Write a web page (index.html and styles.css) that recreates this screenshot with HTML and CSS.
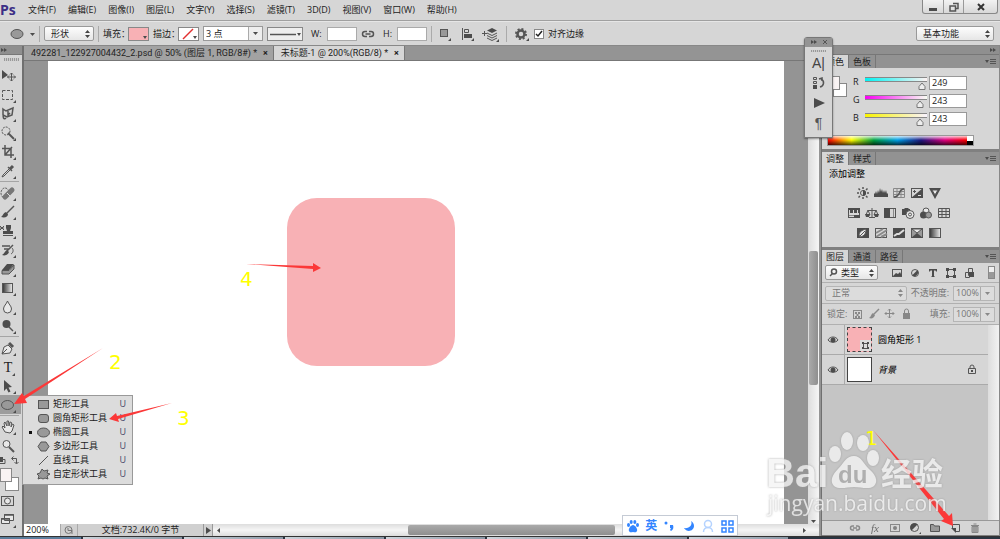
FILE: index.html
```html
<!DOCTYPE html>
<html lang="zh-CN">
<head>
  <meta charset="UTF-8" />
  <meta name="viewport" content="width=device-width, initial-scale=1.0" />
  <title>Photoshop</title>
  <link rel="stylesheet" href="styles.css">
</head>
<body>
  <header class="menubar">
    <span class="logo">Ps</span>
    <nav class="menus">
      <button>文件(F)</button>
      <button>编辑(E)</button>
      <button>图像(I)</button>
      <button>图层(L)</button>
      <button>文字(Y)</button>
      <button>选择(S)</button>
      <button>滤镜(T)</button>
      <button>3D(D)</button>
      <button>视图(V)</button>
      <button>窗口(W)</button>
      <button>帮助(H)</button>
    </nav>
    <div class="window-buttons">
      <button aria-label="最小化"><svg width="12" height="12"><path class="f" d="M2 7h8v3H2z"/></svg></button>
      <button aria-label="还原"><svg width="12" height="12"><path class="thick" d="M5 2.500h5v5H8M2 5h5.500v5H2z"/></svg></button>
      <button class="close" aria-label="关闭"><svg width="12" height="12"><path class="cross" d="M3 3l6 6M9 3l-6 6"/></svg></button>
    </div>
  </header>

  <div class="options">
    <button class="preset" aria-label="工具预设">
      <svg width="26" height="14"><ellipse class="g" cx="7" cy="7" rx="6" ry="4.500"/><path class="f" d="M20 6h5l-2.500 3z"/></svg>
    </button>
    <select class="mode" aria-label="模式"><option>形状</option></select>
    <i class="divider"></i>
    <label for="fill">填充：</label>
    <button id="fill" class="swatch pink"><svg width="19" height="13"><path class="f" d="M14 9h4l-2 3z"/></svg></button>
    <label for="stroke">描边：</label>
    <button id="stroke" class="swatch"><svg width="19" height="13"><path class="no-stroke" d="M4 12L14 2"/><path class="f" d="M14 9h4l-2 3z"/></svg></button>
    <div class="combo stroke-width">
      <input type="text" value="3 点" aria-label="描边宽度">
      <button aria-label="选择宽度"><svg width="7" height="5"><path class="f" d="M1 1h5L3.500 4z"/></svg></button>
    </div>
    <button class="line-type" aria-label="描边类型"><svg width="34" height="12"><path class="thick" d="M2 6.500h26"/><path class="f" d="M29 5h4l-2 3z"/></svg></button>
    <label for="w">W:</label>
    <input id="w" class="size" type="text">
    <button aria-label="链接"><svg width="14" height="12"><path class="thick" d="M6 3.500H4a2.500 2.500 0 000 5h2M8 3.500h2a2.500 2.500 0 010 5H8M4.500 6h5"/></svg></button>
    <label for="h">H:</label>
    <input id="h" class="size" type="text">
    <i class="divider"></i>
    <div class="path-tools">
      <button aria-label="路径操作"><svg width="16" height="16"><rect class="g" x="3.500" y="3.500" width="7" height="7"/><path class="f" d="M14 12v3h-3z"/></svg></button>
      <button aria-label="路径对齐"><svg width="16" height="16"><path d="M3.500 2v12"/><path d="M5.500 3.500h4v3h-4z"/><path class="f" d="M5 8h8v4H5zM15 12v3h-3z"/></svg></button>
      <button aria-label="路径排列"><svg width="18" height="16"><path d="M1 7.500h5M3.500 5v5"/><path class="f" d="M11 2l5 2.500-5 2.500-5-2.500z"/><path d="M6 7l5 2.500L16 7M6 9.500l5 2.500 5-2.500M6 12l5 2.500 5-2.500"/><path class="f" d="M18 13v3h-3z"/></svg></button>
    </div>
    <i class="divider"></i>
    <button class="gear" aria-label="设置"><svg width="16" height="16"><circle class="gear-ring" cx="7" cy="8" r="3.500"/><circle class="gear-teeth" cx="7" cy="8" r="5"/><path class="f" d="M15 12v3h-3z"/></svg></button>
    <label class="check"><input type="checkbox" checked>对齐边缘</label>
    <select class="workspace" aria-label="工作区"><option>基本功能</option></select>
  </div>

  <main class="app">
    <aside class="toolbar">
      <div class="strip"><svg width="7" height="7"><path class="f" d="M0 1l3 2-3 2zM3 1l3 2-3 2z"/></svg></div>
      <div class="grip"></div>
      <button aria-label="移动"><svg width="16" height="16"><path class="f" d="M2 2l6 5-6 4z"/><path d="M11.500 5v8M7.500 9h8M10 6.500l1.500-1.500 1.500 1.500M10 11.500l1.500 1.500 1.500-1.500M9 7.500L7.500 9 9 10.500M14 7.500L15.500 9 14 10.500"/></svg></button>
      <button aria-label="选框"><svg width="16" height="16"><rect x="2.500" y="3.500" width="10" height="9" stroke-dasharray="3 1.500"/><path class="f" d="M16 13v3h-3z"/></svg></button>
      <button aria-label="套索"><svg width="16" height="16"><path class="thick" d="M3 3l3 2 7-3-1 7-5 2-4-2zM4 9c-2 2 0 5 2 3M8 5v4l2-2"/><path class="f" d="M16 13v3h-3z"/></svg></button>
      <button aria-label="魔棒"><svg width="16" height="16"><circle cx="6" cy="6" r="4" stroke-dasharray="2 1"/><path class="bold" d="M8 8l6 6"/><path class="f" d="M16 13v3h-3z"/></svg></button>
      <button aria-label="裁剪"><svg width="16" height="16"><path class="thick" d="M5 1v10h9M2 4.500h9V14M5 11l7-8"/><path class="f" d="M16 13v3h-3z"/></svg></button>
      <button aria-label="吸管"><svg width="16" height="16"><path class="heavy" d="M10 6l3-3"/><path class="thick" d="M8 4l4 4"/><path d="M9 6l-6 6-1 2 2-1 6-6"/><path class="f" d="M16 13v3h-3z"/></svg></button>
      <hr>
      <button aria-label="修复画笔"><svg width="16" height="16"><ellipse cx="5" cy="8" rx="4" ry="5" stroke-dasharray="2 1"/><path class="bandage" d="M5 12l7-7"/><path class="pale" d="M7 8l3 3"/><path class="f" d="M16 13v3h-3z"/></svg></button>
      <button aria-label="画笔"><svg width="16" height="16"><path class="thick" d="M14 2L7 9"/><path class="f" d="M6 8l2 2c0 3-3 4-7 3 2-1 2-4 5-5zM16 13v3h-3z"/></svg></button>
      <button aria-label="仿制图章"><svg width="16" height="16"><path d="M0 3l4 4M4 3L0 7M0 5h4"/><path class="f" d="M6 2h5v3l-1 3h3v3H3V8h4L6 5z"/><path d="M3 12.500h10"/><path class="f" d="M16 13v3h-3z"/></svg></button>
      <button aria-label="历史画笔"><svg width="16" height="16"><path class="thick" d="M2 4h8M4 7h5M13 3L7 9"/><path class="f" d="M7 8l2 2c-1 3-4 4-7 3 2-1 3-4 5-5z"/><path d="M12 6c2 2 1 5-1 6"/><path class="f" d="M16 13v3h-3z"/></svg></button>
      <button aria-label="橡皮擦"><svg width="16" height="16"><path class="g" d="M2 9.500h7L14 4v4l-5 5H2z"/><path class="f" d="M7 3h7l-5 6H2z"/><path class="f" d="M16 13v3h-3z"/></svg></button>
      <button aria-label="渐变"><svg width="16" height="16"><defs><linearGradient id="gr"><stop stop-color="#333"/><stop offset="1" stop-color="#eee"/></linearGradient></defs><rect class="ramp-fill" x="2.500" y="3.500" width="10" height="9"/><path class="f" d="M16 13v3h-3z"/></svg></button>
      <button aria-label="模糊"><svg width="16" height="16"><path class="light" d="M7.500 2c1 3 4 5 4 8a4 4 0 01-8 0c0-3 3-5 4-8z"/><path class="f" d="M16 13v3h-3z"/></svg></button>
      <button aria-label="加深"><svg width="16" height="16"><circle class="f" cx="6.500" cy="6" r="4"/><path class="thick" d="M9 9l4 4"/><path class="f" d="M16 13v3h-3z"/></svg></button>
      <hr>
      <button aria-label="钢笔"><svg width="16" height="16"><path class="light" d="M2 14l2-7 4-2 4 4-2 4zM2 14l5-5"/><path class="heavy" d="M9 3l4 4"/><path class="f" d="M16 13v3h-3z"/></svg></button>
      <button class="type-tool">T<svg width="3" height="3"><path class="f" d="M3 0v3H0z"/></svg></button>
      <button aria-label="路径选择"><svg width="16" height="16"><path class="f" d="M4 2l8 7-3.500.500 2 4-2 1-2-4L4 13zM16 13v3h-3z"/></svg></button>
      <div class="flyout-anchor">
        <button class="active" aria-label="椭圆工具"><svg width="16" height="16"><ellipse class="g" cx="7.500" cy="8" rx="6" ry="4.500"/><path class="f" d="M16 13v3h-3z"/></svg></button>
        <div class="flyout">
          <button><svg width="14" height="12"><rect class="g" x="2.500" y="2.500" width="10" height="8"/></svg><span>矩形工具</span><kbd>U</kbd></button>
          <button><svg width="14" height="12"><rect class="g" x="2.500" y="2.500" width="10" height="8" rx="2.500"/></svg><span>圆角矩形工具</span><kbd>U</kbd></button>
          <button class="current"><svg width="14" height="12"><ellipse class="g" cx="7.500" cy="6.500" rx="6" ry="4.500"/></svg><span>椭圆工具</span><kbd>U</kbd></button>
          <button><svg width="14" height="12"><path class="g" d="M5 2h5l3 4.500-3 4.500H5L2 6.500z"/></svg><span>多边形工具</span><kbd>U</kbd></button>
          <button><svg width="14" height="12"><path d="M3 11l9-9"/></svg><span>直线工具</span><kbd>U</kbd></button>
          <button><svg width="14" height="12"><path class="g" d="M6 1l2 2 4-1-1 3 3 1-3 2 1 3-3-1-2 1-2-1-3 1 1-3-2-2 3-1z"/></svg><span>自定形状工具</span><kbd>U</kbd></button>
        </div>
      </div>
      <hr>
      <button aria-label="抓手"><svg width="16" height="16"><path class="light" d="M5 13L2 8l1-1 2 2-1-5 1-1 2 4V2l1.500 0L9 7l1-4 1.500.500L11 8l1.500-3L14 6l-2 6-2 2z"/><path class="f" d="M16 13v3h-3z"/></svg></button>
      <button aria-label="缩放"><svg width="16" height="16"><circle class="light" cx="6.500" cy="6" r="3.500"/><path class="bold" d="M9 9l5 5"/></svg></button>
      <button class="swap" aria-label="切换颜色"><svg width="22" height="11"><path class="f" d="M0 2h3v5H0z"/><path d="M1 4.500h4v4H0"/><path d="M12 3.500h4.500v5M13.500 1.500l-2 2 2 2M14.500 7l2 2 2-2"/></svg></button>
      <div class="colors"><i class="bg"></i><i class="fg"></i></div>
      <button aria-label="快速蒙版"><svg width="16" height="16"><rect x="1.500" y="3.500" width="12" height="9"/><circle class="light" cx="7.500" cy="8" r="3"/></svg></button>
      <button aria-label="屏幕模式"><svg width="16" height="16"><path class="light" d="M4.500 2.500h9v6h-9zM1.500 6.500h8v5h-8z"/><path class="thick" d="M4 3h10M1 7h9"/><path class="f" d="M16 13v3h-3z"/></svg></button>
    </aside>

    <section class="document">
      <div class="tabs">
        <div class="tab"><span>492281_122927004432_2.psd @ 50% (图层 1, RGB/8#) *</span><button aria-label="关闭标签">×</button></div>
        <div class="tab selected"><span>未标题-1 @ 200%(RGB/8) *</span><button aria-label="关闭标签">×</button></div>
      </div>
      <div class="viewport">
        <div class="artboard"><div class="rounded-rect"></div></div>
        <div class="vscroll"><div class="thumb"></div><svg width="7" height="5"><path class="f" d="M1 1h5L3.500 4z"/></svg></div>
      </div>
      <div class="status">
        <input type="text" value="200%" aria-label="缩放比例">
        <button class="info" aria-label="信息"><svg width="12" height="10"><circle cx="5.500" cy="5" r="3.500"/><path d="M5 3v2.500h4V9"/></svg></button>
        <span class="doc-size">文档:732.4K/0 字节</span>
        <button class="more" aria-label="更多"><svg width="7" height="9"><path class="f" d="M1 1l5 3.500L1 8z"/></svg></button>
        <div class="hscroll">
          <svg width="5" height="7"><path class="f" d="M4 1v5L1 3.500z"/></svg>
          <div class="track"><div class="thumb"></div></div>
          <svg width="5" height="7"><path class="f" d="M1 1v5l3-2.500z"/></svg>
        </div>
      </div>
    </section>

    <aside class="panels">
      <div class="strip right"><svg width="7" height="7"><path class="f" d="M0 1l3 2-3 2zM3 1l3 2-3 2z"/></svg></div>

      <section class="panel">
        <div class="panel-tabs">
          <button class="selected">颜色</button><button>色板</button>
          <svg width="12" height="8"><path class="f" d="M0 2h4L2 5z"/><path d="M5 1.500h6M5 3.500h6M5 5.500h6"/></svg>
        </div>
        <div class="color-body">
          <div class="colors"><i class="bg"></i><i class="fg"></i></div>
          <div class="channels">
            <div class="channel cyan"><label for="r">R</label><input type="range" max="255" value="249" aria-label="红"><input id="r" type="text" value="249"></div>
            <div class="channel magenta"><label for="g">G</label><input type="range" max="255" value="243" aria-label="绿"><input id="g" type="text" value="243"></div>
            <div class="channel yellow"><label for="b">B</label><input type="range" max="255" value="243" aria-label="蓝"><input id="b" type="text" value="243"></div>
          </div>
        </div>
        <div class="spectrum"><div class="ramp"></div><div class="ends"></div></div>
      </section>

      <section class="panel">
        <div class="panel-tabs">
          <button class="selected">调整</button><button>样式</button>
          <svg width="12" height="8"><path class="f" d="M0 2h4L2 5z"/><path d="M5 1.500h6M5 3.500h6M5 5.500h6"/></svg>
        </div>
        <div class="adjust">
          <h2>添加调整</h2>
          <div class="icons">
            <svg width="14" height="14"><circle cx="7" cy="7" r="2.500"/><path class="f" d="M7 4a3 3 0 010 6z"/><path class="thick" d="M7 1v2M7 11v2M1 7h2M11 7h2M2.500 2.500L4 4M10 10l1.500 1.500M11.500 2.500L10 4M4 10l-1.500 1.500"/></svg>
            <svg width="14" height="14"><path class="f" d="M0 11V7l1 1 1-3 1 3 1-4 1 3 1-5 1 4 1-3 1 4 1-3 1 3 1-3 1 4 1-1v4z"/></svg>
            <svg width="14" height="14"><path class="mid" d="M1.500 2.500h11v9h-11zM5 2v10M9 2v10M1 5.500h12M1 8.500h12"/><path class="thick" d="M2 11c7 0 4-8 10-8"/></svg>
            <svg width="14" height="14"><rect x="1.500" y="2.500" width="11" height="9"/><path class="f" d="M13 2v10H1z"/><path d="M3 5.500h3M4.500 4v3"/><path class="pale" d="M8 9.500h3"/></svg>
            <svg width="14" height="14"><path class="f" d="M1 2h12L7 13z"/><path class="light" d="M4 4h6l-3 5z"/></svg>
          </div>
          <div class="icons">
            <svg width="14" height="14"><rect x="1.500" y="2.500" width="11" height="9"/><path class="f" d="M1 2h12v5h-2V4h-1v3H7V4H6v3H3V4H2v3H1zM7 9h6v3H7z"/><path class="mid" d="M2 9.500h5"/></svg>
            <svg width="14" height="14"><path d="M7 2v9.500M4 11.500h6M3 4.500h8"/><path d="M3 4L1 9h4zM11 4L9 9h4z"/><path class="f" d="M0 8h5l-1 3H1zM9 8h5l-1 3h-3z"/></svg>
            <svg width="14" height="14"><rect x="1.500" y="2.500" width="11" height="9"/><path class="f" d="M1 2h6v10H1z"/><path class="mid" d="M10.500 3v8"/></svg>
            <svg width="14" height="14"><path class="f" d="M1 3h2l1-1h3l1 1h1v6H1z"/><circle class="light" cx="9" cy="8.500" r="4"/><circle cx="9" cy="8.500" r="1.500"/></svg>
            <svg width="14" height="14"><circle class="light" cx="7" cy="5" r="3"/><circle class="f" cx="4.500" cy="9" r="3.500"/><circle class="g" cx="9.500" cy="9" r="3"/></svg>
            <svg width="14" height="14"><path d="M1.500 2.500h11v9h-11zM5 2v10M9 2v10M1 5.500h12M1 8.500h12"/></svg>
          </div>
          <div class="icons">
            <svg width="14" height="14"><path class="f" d="M1 2h12v10H1z"/><path class="light" d="M10 3c0 4-1 7-6 8L3 9c0-3 3-5 7-6z"/><path d="M9 5l-5 5"/></svg>
            <svg width="14" height="14"><rect x="1.500" y="2.500" width="11" height="9"/><path class="mid bold" d="M2 7l7-4M2 11l11-7M7 11l6-3"/></svg>
            <svg width="14" height="14"><path class="f" d="M1 2h12v10H1z"/><path class="pale bold" d="M2 10l3-2h2l5-4"/></svg>
            <svg width="14" height="14"><rect class="g" x="1.500" y="2.500" width="11" height="9"/><path class="f" d="M1 12l6-5 6 5z"/><path class="light" d="M2 3h10L7 7z"/></svg>
            <svg width="14" height="14"><rect class="ramp-fill" x="1.500" y="2.500" width="11" height="9"/></svg>
          </div>
        </div>
      </section>

      <section class="panel layers">
        <div class="panel-tabs">
          <button class="selected">图层</button><button>通道</button><button>路径</button>
          <svg width="12" height="8"><path class="f" d="M0 2h4L2 5z"/><path d="M5 1.500h6M5 3.500h6M5 5.500h6"/></svg>
        </div>
        <div class="row filter">
          <div class="kind-wrap">
            <svg width="9" height="9"><circle class="thick" cx="5" cy="3.500" r="2.500"/><path class="thick" d="M3.500 5.500L1 8"/></svg>
            <select aria-label="滤镜类型"><option>类型</option></select>
          </div>
          <div class="filter-icons">
            <svg width="12" height="12"><rect x="1.500" y="2.500" width="9" height="7"/><path class="f" d="M2 9l3-3 2 1 2-2 2 4z"/></svg>
            <svg width="12" height="12"><circle cx="6" cy="6" r="3.500"/><path class="f" d="M3 8.500A4 4 0 008.500 3z"/></svg>
            <svg width="12" height="12"><path class="f" d="M2 2h8v2.500H9L8.500 3.500H7V9l1 1H4l1-1V3.500H3.500L3 4.500H2z"/></svg>
            <svg width="12" height="12"><path d="M2.500 2.500h7v7h-7z"/><path class="f" d="M1 1h3v3H1zM8 1h3v3H8zM1 8h3v3H1zM8 8h3v3H8z"/></svg>
            <svg width="12" height="12"><path d="M5.500 1.500h4v7h-4zM2.500 5.500h4v5h-4z"/><path class="f" d="M6 5h5v5H6z"/></svg>
          </div>
          <i class="toggle"></i>
        </div>
        <div class="row dim">
          <select class="blend" aria-label="混合模式"><option>正常</option></select>
          <label for="opacity">不透明度:</label>
          <div class="combo"><input id="opacity" type="text" value="100%"><button aria-label="不透明度选项"><svg width="7" height="5"><path class="f" d="M1 1h5L3.500 4z"/></svg></button></div>
        </div>
        <div class="row dim lock-row">
          <span>锁定:</span>
          <div class="locks">
            <svg width="12" height="12"><rect x="1.500" y="2.500" width="8" height="8"/><path class="f" d="M3 4h2v2H3zM6 4h2v2H6zM4.500 6h2v2h-2zM3 8h2v2H3zM6 8h2v2H6z"/></svg>
            <svg width="12" height="12"><path class="thick" d="M11 1L6 6"/><path class="f" d="M5 5l2 2c-1 3-3 4-6 3 2-1 2-4 4-5z"/></svg>
            <svg width="12" height="12"><path d="M5.500 1v9M1 5.500h9M4 2.500L5.500 1 7 2.500M4 8.500L5.500 10 7 8.500M2.500 4L1 5.500 2.500 7M8.500 4L10 5.500 8.500 7"/></svg>
            <svg width="12" height="12"><path class="f" d="M3 5h7v6H3z"/><path d="M4.500 5V3a2 2 0 014 0v2"/></svg>
          </div>
          <label for="fill-opacity">填充:</label>
          <div class="combo"><input id="fill-opacity" type="text" value="100%"><button aria-label="填充选项"><svg width="7" height="5"><path class="f" d="M1 1h5L3.500 4z"/></svg></button></div>
        </div>
        <div class="list-area">
          <ul class="layer-list">
            <li>
              <button class="eye" aria-label="可见性"><svg width="12" height="10"><path d="M1 5c2-4 8-4 10 0-2 3-8 3-10 0z"/><circle class="f" cx="6" cy="5" r="2.500"/></svg></button>
              <div class="layer-thumb pink"><svg width="11" height="11"><rect class="badge" width="11" height="11"/><path d="M3.500 3.500h4v5h-4z"/><path class="f" d="M2 2h2v2H2zM7 2h2v2H7zM2 7h2v2H2zM7 7h2v2H7z"/></svg></div>
              <span>圆角矩形 1</span>
            </li>
            <li>
              <button class="eye" aria-label="可见性"><svg width="12" height="10"><path d="M1 5c2-4 8-4 10 0-2 3-8 3-10 0z"/><circle class="f" cx="6" cy="5" r="2.500"/></svg></button>
              <div class="layer-thumb"></div>
              <span class="background">背景</span>
              <svg width="10" height="11"><path d="M1.500 4.500h7v5h-7zM3 4.500V3a2 2 0 014 0v1.500"/><path class="f" d="M4 6h2v2H4z"/></svg>
            </li>
          </ul>
          <div class="list-scroll"></div>
        </div>
        <footer class="layer-actions">
          <button class="off" aria-label="链接图层"><svg width="12" height="12"><path class="thick" d="M5 4H3.500a2 2 0 000 4H5M7 4h1.500a2 2 0 010 4H7M4 6h4"/></svg></button>
          <button class="off fx">fx</button>
          <button class="off" aria-label="蒙版"><svg width="12" height="12"><rect x="1.500" y="2.500" width="9" height="7"/><circle class="f" cx="6" cy="6" r="2"/></svg></button>
          <button aria-label="调整图层"><svg width="12" height="12"><circle cx="5.500" cy="5.500" r="4"/><path class="f" d="M2.500 8.500a4 4 0 016-6zM12 10v2h-2z"/></svg></button>
          <button aria-label="新建组"><svg width="12" height="12"><path class="g" d="M1.500 2.500h3l1 1.500h5v5.500h-9z"/></svg></button>
          <button aria-label="新建图层"><svg width="12" height="12"><path d="M3.500 6V2.500h7v7H7"/><path class="f" d="M2 6h5v5z"/></svg></button>
          <button class="off" aria-label="删除"><svg width="12" height="12"><path class="g" d="M2 3.500h8M4.500 2h3M3 4.500h6v6H3zM5 5v5M7 5v5"/></svg></button>
        </footer>
      </section>
    </aside>
  </main>

  <div class="taskbar"><i></i><i></i><i></i><i></i><i></i><i></i><i></i><i></i></div>

  <div class="float-panel">
    <div class="float-head"><svg width="7" height="7"><path class="f" d="M0 1l3 2-3 2zM3 1l3 2-3 2z"/></svg><svg width="7" height="7"><path d="M1 1l4 4M5 1L1 5"/></svg></div>
    <div class="grip"></div>
    <button class="char">A|</button>
    <button aria-label="段落样式"><svg width="14" height="14"><path d="M1.500 1.500h3v2h-3zM1.500 5.500h3v2h-3z"/><path class="f" d="M1 9h4v4H1z"/><path class="thick" d="M7 3l3-1v3M9 3c4 2 3 7-1 8"/></svg></button>
    <button aria-label="动作"><svg width="14" height="14"><path class="f" d="M2 2l11 5-11 5z"/></svg></button>
    <button class="para">¶</button>
  </div>

  <div class="ime">
    <svg width="14" height="14"><ellipse cx="2.500" cy="6" rx="1.500" ry="2"/><ellipse cx="5.200" cy="3" rx="1.500" ry="2"/><ellipse cx="8.800" cy="3" rx="1.500" ry="2"/><ellipse cx="11.500" cy="6" rx="1.500" ry="2"/><path d="M7 6c2 0 5 4 4 6s-2 1-4 1-3 1-4-1 2-6 4-6z"/></svg>
    <b>英</b>
    <svg width="14" height="14"><circle cx="4" cy="4" r="1.500"/><path d="M8 6h3c1 3 0 5-2 6l-1-1 1-2H8z"/></svg>
    <svg width="14" height="14"><path class="moon" d="M9 2c2 4-2 8-7 7 3 5 10 3 10-2 0-2-1-4-3-5z"/></svg>
    <svg width="14" height="14" class="person"><circle cx="7" cy="5" r="3.500"/><path d="M2.500 13c0-6 9-6 9 0"/></svg>
    <svg width="14" height="14"><path class="grid" d="M2 2h4v4H2zM9 2h4v4H9zM2 9h4v4H2zM9 9h4v4H9z"/></svg>
  </div>

  <svg class="overlay" width="1000" height="539">
    <g class="notes">
      <path d="M103 348L25 399l2 4-13 1 8-11 2 3z"/>
      <path d="M172 403l-54 16 1 3-10-3 7-6 1 3z"/>
      <path d="M246 264l67 2v-3l8 5-8 4v-3z"/>
      <path d="M873 430l76 86 3-3 1 13-12-5 3-2z"/>
      <text x="240" y="286">4</text>
      <text x="109" y="369">2</text>
      <text x="177" y="425">3</text>
      <text x="865" y="445">1</text>
    </g>
    <g class="watermark">
      <text class="bai" x="766" y="487">Bai</text>
      <ellipse cx="835" cy="454" rx="6" ry="8"/>
      <ellipse cx="847" cy="441" rx="6" ry="9"/>
      <ellipse cx="863" cy="443" rx="6" ry="8"/>
      <ellipse cx="873" cy="458" rx="6" ry="8"/>
      <path d="M854 456c7 0 9 7 15 13 6 5 10 12 5 17-5 4-13 1-20 1s-15 3-20-1c-5-5-1-12 4-17 6-6 8-13 16-13z"/>
      <text class="du" x="838" y="483">du</text>
      <text class="jy" x="881" y="485">经验</text>
      <text class="url" x="768" y="511">jingyan.baidu.com</text>
    </g>
  </svg>
</body>
</html>
```
FILE: styles.css
```css
* {
  box-sizing: border-box;
}
body {
  margin: 0;
  height: 100vh;
  display: flex;
  flex-direction: column;
  overflow: hidden;
  position: relative;
  background: #d6d6d6;
  color: #222;
  font: 9px/12px "Open Sans", "Noto Sans CJK SC", sans-serif;
}
button, input, select {
  font: inherit;
  color: inherit;
  margin: 0;
  padding: 0;
  border: 0;
  background: none;
  border-radius: 0;
  min-width: 0;
}
button {
  display: flex;
  align-items: center;
  justify-content: center;
  flex: none;
}

/* icons */
svg {
  display: block;
  flex: none;
  fill: none;
  stroke: #555;
}
.f {
  fill: #4c4c4c;
  stroke: none;
}
.g {
  fill: #999;
  stroke: #555;
}
.light {
  fill: #e8e8e8;
}
.mid {
  stroke: #888;
}
.pale {
  stroke: #ddd;
}
.thick {
  stroke-width: 1.5;
}
.bold {
  stroke-width: 2;
}
.heavy {
  stroke-width: 3;
}
.cross {
  stroke: #333;
  stroke-width: 2;
}
.no-stroke {
  stroke: #e23030;
  stroke-width: 1.5;
}
.bandage {
  stroke: #777;
  stroke-width: 5;
  stroke-linecap: round;
}
.gear-ring {
  stroke-width: 2.5;
}
.gear-teeth {
  stroke-width: 2;
  stroke-dasharray: 2 1.9;
}
.ramp-fill {
  fill: url(#gr);
}
.badge {
  fill: #ddd;
  stroke: none;
}
.pink {
  background: #f8b1b5;
}

/* menu bar */
.menubar {
  display: flex;
  align-items: center;
  height: 21px;
  flex: none;
  border-bottom: 1px solid #a0a0a0;
}
.logo {
  width: 28px;
  font: bold 14px/20px "Open Sans", sans-serif;
  color: #3c2f86;
}
.menus {
  display: flex;
  flex: 1;
  gap: 12px;
}
.window-buttons {
  display: flex;
  align-self: flex-start;
  margin-right: 2px;
  border: 1px solid #888;
  border-top: 0;
  border-radius: 0 0 3px 3px;
  background: linear-gradient(#f2f2f2, #d8d8d8);
}
.window-buttons button {
  width: 20px;
  height: 13px;
}
.window-buttons button + button {
  border-left: 1px solid #999;
}
.window-buttons .close {
  width: 34px;
}

/* options bar */
.options {
  display: flex;
  align-items: center;
  gap: 4px;
  height: 25px;
  flex: none;
  padding: 0 6px 0 10px;
  border-top: 1px solid #e6e6e6;
  border-bottom: 1px solid #888;
}
.options label {
  white-space: nowrap;
}
.options label[for="fill"],
.options label[for="stroke"] {
  width: 21px;
}
.options label[for="w"],
.options label[for="h"] {
  width: 12px;
  margin-left: 4px;
}
.options label[for="h"] {
  width: 10px;
}
.divider {
  width: 1px;
  height: 16px;
  background: #aaa;
}
.preset {
  border-right: 1px solid #aaa;
  height: 16px;
  padding-right: 3px;
}
select {
  appearance: none;
  height: 15px;
  padding: 0 6px;
  border: 1px solid #999;
  border-radius: 2px;
  background: url("data:image/svg+xml,%3Csvg xmlns='http://www.w3.org/2000/svg' width='5' height='8'%3E%3Cpath fill='%23444' d='M0 3h5L2.500 0zM0 5h5L2.500 8z'/%3E%3C/svg%3E") no-repeat right 3px center, linear-gradient(#fdfdfd, #e6e6e6);
}
.mode {
  width: 50px;
}
.workspace {
  width: 78px;
  margin-left: auto;
}
.swatch {
  height: 14px;
  border: 1px solid #888;
}
.swatch:not(.pink) {
  background: #fff;
}
.combo {
  display: flex;
  height: 15px;
  border: 1px solid #999;
  background: #fff;
}
.combo input {
  flex: 1;
  width: 0;
  padding-left: 2px;
}
.combo button {
  width: 14px;
  border-left: 1px solid #aaa;
  background: #eee;
}
.stroke-width {
  width: 60px;
}
.line-type {
  height: 14px;
  border: 1px solid #888;
  background: #eee;
}
.size {
  width: 30px;
  height: 14px;
  border: 1px solid #aaa;
  background: #fff;
}
.path-tools {
  display: flex;
  gap: 6px;
  padding: 0 3px 0 1px;
}
.gear {
  margin-left: 3px;
}
.check {
  display: flex;
  align-items: center;
  gap: 4px;
}
.check input {
  appearance: none;
  width: 10px;
  height: 10px;
  border: 1px solid #888;
  background: #fff url("data:image/svg+xml,%3Csvg xmlns='http://www.w3.org/2000/svg' width='8' height='8'%3E%3Cpath fill='none' stroke='%23222' stroke-width='1.500' d='M1 4l2 2 4-5'/%3E%3C/svg%3E") center no-repeat;
}

/* work area */
.app {
  flex: 1;
  display: flex;
  min-height: 0;
}
.strip {
  height: 9px;
  flex: none;
  padding: 1px;
  background: #8f8f8f;
  border-bottom: 1px solid #777;
}
.strip.right {
  display: flex;
  justify-content: flex-end;
  padding-right: 2px;
}
.toolbar {
  width: 24px;
  flex: none;
  border-right: 2px solid #707070;
}
.toolbar > button,
.flyout-anchor > button {
  width: 19px;
  height: 19px;
  padding-right: 3px;
}
.grip {
  width: 15px;
  height: 3px;
  margin: 3px auto 5px;
  background: repeating-linear-gradient(90deg, #999 0 1px, #ccc 1px 2px);
}
.toolbar hr {
  height: 1px;
  margin: 1px 3px 1px 0;
  border: 0;
  background: #a5a5a5;
}
.toolbar .type-tool {
  padding-right: 0;
  font: 14px/16px "Liberation Serif", serif;
  align-items: flex-end;
}
.flyout-anchor {
  position: relative;
}
.flyout-anchor > .active {
  width: 21px;
  padding-right: 5px;
  background: #9d9d9d;
}
.flyout {
  position: absolute;
  z-index: 5;
  left: 22px;
  top: 0;
  width: 111px;
  padding: 1px 6px 3px;
  border: 1px solid #999;
  background: #dcdcdc;
}
.flyout button {
  width: 100%;
  height: 14px;
  gap: 3px;
  padding-left: 7px;
}
.flyout .current {
  background: linear-gradient(#111, #111) 0 center / 3px 3px no-repeat;
}
.flyout span {
  flex: 1;
  text-align: left;
}
.flyout kbd {
  font: inherit;
  color: #446;
}
.toolbar .swap {
  width: 22px;
  height: 11px;
  padding: 0;
}
.colors {
  display: grid;
  grid-template-columns: 7px 7px 7px;
  grid-template-rows: 7px 7px 7px;
}
.colors .bg {
  grid-area: 2 / 2 / 4 / 4;
  border: 1px solid #888;
  background: #fff;
}
.colors .fg {
  grid-area: 1 / 1 / 3 / 3;
  border: 1px solid #888;
  background: #f9f3f3;
}
.toolbar .colors {
  grid-template-columns: 5px 7px 7px;
  grid-template-rows: 9px 5px 9px;
  margin-top: 2px;
}

/* document */
.document {
  flex: 1;
  min-width: 0;
  display: flex;
  flex-direction: column;
  background: #949494;
}
.tabs {
  display: flex;
  height: 15px;
  flex: none;
  border-bottom: 1px solid #777;
  font-family: Roboto, "Noto Sans CJK SC", sans-serif;
}
.tab {
  display: flex;
  align-items: center;
  gap: 6px;
  padding: 0 5px 0 7px;
  border-right: 1px solid #777;
  background: #a2a2a2;
  white-space: nowrap;
}
.tab.selected {
  background: #d6d6d6;
}
.tab button {
  font-weight: bold;
}
.viewport {
  flex: 1;
  display: flex;
  min-height: 0;
  padding-left: 24px;
}
.artboard {
  flex: 1;
  position: relative;
  margin-right: 24px;
  background: #fff;
}
.rounded-rect {
  position: absolute;
  left: 239px;
  top: 137px;
  width: 168px;
  height: 168px;
  border-radius: 30px;
  background: #f8b1b5;
}
.vscroll {
  width: 11px;
  display: flex;
  flex-direction: column;
  align-items: center;
  margin-right: 2px;
  background: linear-gradient(90deg, #ddd, #f5f5f5);
}
.vscroll .thumb {
  width: 9px;
  height: 29%;
  margin: 190px 0 auto;
  border-radius: 2px;
  background: linear-gradient(90deg, #aaa, #8f8f8f);
}
.status {
  display: flex;
  align-items: stretch;
  height: 12px;
  flex: none;
  margin-right: 2px;
  background: #d0d0d0;
}
.status input {
  width: 36px;
  padding-left: 2px;
  background: #fff;
}
.status .info {
  width: 18px;
  border: solid #aaa;
  border-width: 0 1px;
}
.status .info svg {
  stroke: #777;
}
.doc-size {
  width: 125px;
  text-align: center;
}
.status .more {
  width: 10px;
  border: solid #999;
  border-width: 0 1px;
}
.hscroll {
  flex: 1;
  display: flex;
  align-items: center;
  gap: 3px;
  padding: 0 12px 0 3px;
  background: linear-gradient(#ddd, #f5f5f5, #ddd);
}
.track {
  flex: 1;
}
.track .thumb {
  width: 36%;
  height: 10px;
  margin-left: 32%;
  border-radius: 2px;
  background: linear-gradient(#aaa, #8f8f8f);
}

/* panels */
.panels {
  width: 179px;
  flex: none;
  display: flex;
  flex-direction: column;
  border-left: 1px solid #707070;
  border-right: 1px solid #888;
}
.panel {
  border-bottom: 3px solid #808080;
}
.panel-tabs {
  display: flex;
  height: 13px;
  background: #929292;
}
.panel-tabs button {
  width: 27px;
  border-right: 1px solid #777;
}
.panel-tabs .selected {
  background: #d6d6d6;
}
.panel-tabs svg {
  margin: 3px 2px 0 auto;
}
.color-body {
  display: flex;
  gap: 6px;
  padding: 8px 0 0 4px;
}
.channels {
  display: flex;
  flex-direction: column;
  gap: 4px;
}
.channel {
  display: flex;
  height: 14px;
}
.channel label {
  width: 12px;
}
.channel input[type="text"] {
  width: 38px;
  margin-left: 2px;
  padding-left: 2px;
  border: 1px solid #999;
  background: #fff;
}
.channel input[type="range"] {
  appearance: none;
  width: 62px;
  height: 14px;
}
.channel input::-webkit-slider-runnable-track {
  height: 13px;
  background: linear-gradient(#888 1px, transparent 1px 4px, #888 4px 5px, #d6d6d6 5px), var(--ramp);
}
.channel input::-webkit-slider-thumb {
  appearance: none;
  width: 8px;
  height: 8px;
  margin-top: 5px;
  background: url("data:image/svg+xml,%3Csvg xmlns='http://www.w3.org/2000/svg' width='8' height='8'%3E%3Cpath fill='%23eee' stroke='%23777' d='M4 1l3 3.500v3H1v-3z'/%3E%3C/svg%3E") no-repeat;
}
.cyan {
  --ramp: linear-gradient(90deg, #00f3f3, #fff3f3);
}
.magenta {
  --ramp: linear-gradient(90deg, #f900f3, #f9fff3);
}
.yellow {
  --ramp: linear-gradient(90deg, #f9f300, #f9f3ff);
}
.spectrum {
  display: flex;
  width: 147px;
  height: 11px;
  margin: 9px 5px 3px;
  border: 1px solid #999;
}
.ramp {
  flex: 1;
  background: linear-gradient(rgba(255, 255, 255, .8), transparent 45%, rgba(0, 0, 0, .7)), linear-gradient(90deg, #f00, #ff0 17%, #00a040 33%, #00a0e8 50%, #201880 67%, #e00080 84%, #f00);
}
.ends {
  width: 6px;
  background: linear-gradient(#fff 50%, #000 50%);
}
.adjust {
  height: 82px;
  padding: 3px 7px;
}
.adjust h2 {
  margin: 0 0 6px;
  font: inherit;
  color: #000;
}
.icons {
  display: flex;
  justify-content: center;
  gap: 4px;
  height: 20px;
  padding-right: 24px;
}
.layers {
  flex: 1;
  display: flex;
  flex-direction: column;
  border-bottom: 1px solid #808080;
}
.layers .panel-tabs {
  flex: none;
}
.row {
  display: flex;
  align-items: center;
  height: 20px;
  flex: none;
  padding: 0 4px 0 3px;
  border-bottom: 1px solid #b0b0b0;
}
.kind-wrap {
  display: grid;
  width: 53px;
}
.kind-wrap > * {
  grid-area: 1 / 1;
}
.kind-wrap svg {
  z-index: 1;
  align-self: center;
  margin-left: 4px;
}
.kind-wrap select {
  padding-left: 15px;
}
.filter-icons {
  display: flex;
  flex: 1;
  gap: 6px;
  padding-left: 13px;
}
.toggle {
  width: 7px;
  height: 13px;
  border: 1px solid #888;
  background: linear-gradient(#eee 50%, #999 50%);
}
.dim {
  height: 21px;
  color: #777;
  justify-content: space-between;
}
.dim select,
.dim .combo {
  border-color: #b5b5b5;
  background-color: #dcdcdc;
}
.dim .combo {
  width: 42px;
}
.dim .combo input,
.dim .combo button {
  background: #dcdcdc;
}
.dim .blend {
  width: 82px;
  background-image: url("data:image/svg+xml,%3Csvg xmlns='http://www.w3.org/2000/svg' width='5' height='8'%3E%3Cpath fill='%23888' d='M0 3h5L2.500 0zM0 5h5L2.500 8z'/%3E%3C/svg%3E");
}
.dim svg {
  stroke: #888;
}
.dim .f {
  fill: #888;
}
.lock-row {
  padding-left: 5px;
  justify-content: flex-start;
  gap: 3px;
}
.locks {
  display: flex;
  flex: 1;
  gap: 4px;
  padding-left: 2px;
}
.list-area {
  flex: 1;
  display: flex;
  background: #c5c5c5;
}
.layer-list {
  flex: 1;
  margin: 0;
  padding: 0;
  list-style: none;
}
.layer-list li {
  display: flex;
  align-items: center;
  height: 30px;
  padding-right: 11px;
  border-bottom: 1px solid #aaa;
  background: #d6d6d6;
}
.layer-list span {
  flex: 1;
  color: #000;
}
.layer-list .background {
  font-style: italic;
}
.eye {
  width: 23px;
  height: 100%;
  border-right: 1px solid #aaa;
}
.layer-thumb {
  display: flex;
  align-items: flex-end;
  justify-content: flex-end;
  width: 25px;
  height: 25px;
  margin: 0 6px 0 2px;
  border: 1px solid #444;
}
.layer-thumb.pink {
  border-style: dashed;
}
.layer-thumb:not(.pink) {
  background: #fff;
}
.list-scroll {
  width: 11px;
  background: linear-gradient(90deg, #ddd, #f2f2f2);
}
.layer-actions {
  display: flex;
  height: 15px;
  flex: none;
  gap: 8px;
  padding: 0 19px 0 27px;
  border-top: 1px solid #999;
}
.layer-actions button {
  width: 12px;
}
.off {
  opacity: .6;
}
.fx {
  font: italic 11px/12px "Liberation Serif", serif;
}

/* taskbar edge */
.taskbar {
  display: flex;
  gap: 2px;
  height: 3px;
  flex: none;
  padding-right: 212px;
  border-top: 1px solid #333;
  background: #2a3440;
}
.taskbar i {
  flex: 1;
  background: linear-gradient(90deg, #ccd3da, #8997a5);
}
.taskbar i:first-child {
  flex: 0 0 81px;
  background: #5c7d9b;
}

/* floating panel */
.float-panel {
  position: absolute;
  right: 167px;
  top: 37px;
  width: 29px;
  height: 101px;
  display: flex;
  flex-direction: column;
  border: 1px solid #777;
  border-radius: 3px 3px 0 0;
  background: #d6d6d6;
  box-shadow: 0 1px 2px rgba(0, 0, 0, .4);
}
.float-head {
  display: flex;
  justify-content: space-between;
  height: 9px;
  padding: 1px 3px 0 6px;
  background: #949494;
}
.float-panel button {
  height: 20px;
}
.float-panel .grip {
  height: 2px;
  margin: 3px auto 1px;
}
.float-panel .char {
  font: 14px "Liberation Sans", sans-serif;
  color: #444;
}
.float-panel .para {
  font: 14px "Liberation Sans", sans-serif;
  color: #555;
}

/* input method bar */
.ime {
  position: absolute;
  right: 262px;
  bottom: 3px;
  display: flex;
  align-items: center;
  justify-content: space-between;
  width: 116px;
  height: 21px;
  padding: 0 3px;
  border: 1px solid #c5cbd5;
  background: #fff;
  color: #3385ff;
}
.ime svg {
  fill: #3385ff;
  stroke: none;
}
.ime b {
  font-size: 12px;
}
.ime .person,
.ime .grid {
  fill: none;
  stroke: #3385ff;
  stroke-width: 1.5;
}
.ime .person {
  stroke: #b5d3ff;
}

/* annotations */
.overlay {
  position: absolute;
  left: 0;
  top: 0;
  z-index: 10;
  stroke: none;
  pointer-events: none;
}
.notes path {
  fill: #fb3838;
}
.notes text {
  fill: #ff0;
  font: 20px "DejaVu Sans", sans-serif;
}
.watermark {
  fill: #f4f4f4;
  opacity: .8;
  filter: drop-shadow(0 0 1px #999);
}
.bai {
  font: bold 40px "Liberation Sans", sans-serif;
}
.du {
  fill: #aaa;
  font: bold 24px "Liberation Sans", sans-serif;
}
.jy {
  font: bold 31px "Noto Sans CJK SC", sans-serif;
}
.url {
  font: 21px "Open Sans", sans-serif;
}
```
